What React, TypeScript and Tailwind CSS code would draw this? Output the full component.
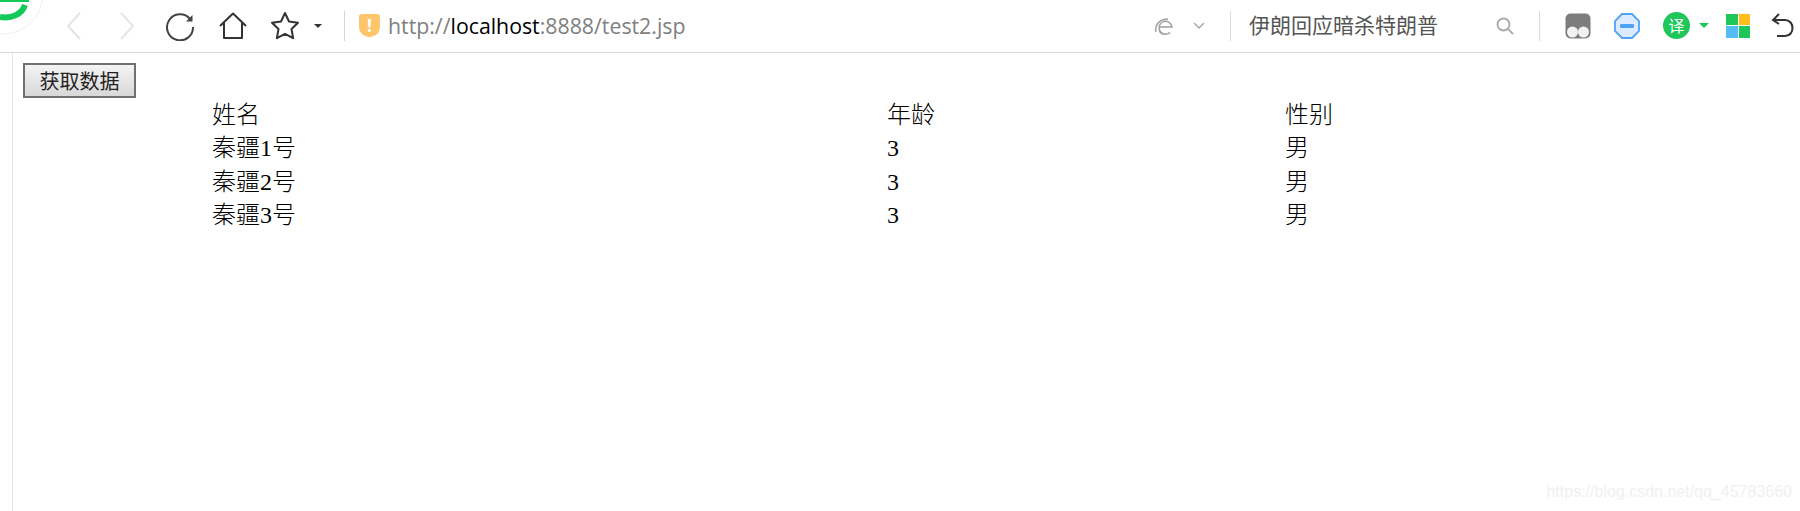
const rows = [
  { name: "秦疆1号", age: 3, sex: "男" },
  { name: "秦疆2号", age: 3, sex: "男" },
  { name: "秦疆3号", age: 3, sex: "男" },
];

const Toolbar = () => (
  <div className="flex h-[53px] items-center border-b border-[#d9d9d9] bg-white pb-[1px] font-['Open_Sans','Noto_Sans_CJK_SC',sans-serif]">
    <svg className="ml-[66px] h-[28px] w-[16px]" viewBox="0 0 16 28" fill="none" stroke="#e4e4e4" strokeWidth="2">
      <path d="M14 1 2 14l12 13" />
    </svg>
    <svg className="ml-[37px] h-[28px] w-[16px]" viewBox="0 0 16 28" fill="none" stroke="#e4e4e4" strokeWidth="2">
      <path d="M2 1l12 13L2 27" />
    </svg>
    <svg className="ml-[30px] h-[30px] w-[30px]" viewBox="0 0 30 30" fill="none" stroke="#444" strokeWidth="2">
      <path d="M25 8A13 13 0 1 0 28 16" />
      <path d="M21 10.500h6.500V4z" fill="#444" stroke="none" />
    </svg>
    <svg className="ml-[24px] h-[28px] w-[28px]" viewBox="0 0 28 28" fill="none" stroke="#333" strokeWidth="2" strokeLinejoin="round">
      <path d="M1 14 14 1.500 27 14" />
      <path d="M5 11v15h18V11" />
    </svg>
    <svg className="ml-[23px] h-[30px] w-[30px]" viewBox="0 0 30 30" fill="none" stroke="#333" strokeWidth="2" strokeLinejoin="round">
      <path d="m15 2 4 8.500 9 1.200-6.500 6.300 1.600 9.200L15 22.800l-8.100 4.400 1.600-9.200L2 11.700l9-1.200z" />
    </svg>
    <div className="ml-[14px] h-0 w-0 border-x-[4px] border-t-[4px] border-x-transparent border-t-[#333]" />
    <div className="ml-[22px] h-[30px] w-[1px] bg-[#d5d5d5]" />
    <div className="ml-[14px] flex h-[23px] w-[21px] items-center justify-center rounded-b-[10px] rounded-t-[3px] bg-[#ffc56b] text-[17px] font-bold leading-none text-white">
      !
    </div>
    <div className="ml-[8px] w-[640px] text-[21.300px] leading-none text-[#808080]">
      http://<span className="text-black">localhost</span>:8888/test2.jsp
    </div>
    <svg className="ml-[126px] h-[20px] w-[20px]" viewBox="0 0 20 20" fill="none" stroke="#a0a0a0" strokeWidth="1.500">
      <path d="M6 11h12a6.500 6.500 0 1 0-2 5.500c-3 2.500-8 2.500-10-.5-1-1.500-1-3-.5-4.500" />
      <path d="M2 16C0 9 6 3 14 3" />
    </svg>
    <svg className="ml-[19px] h-[8px] w-[12px]" viewBox="0 0 12 8" fill="none" stroke="#aaa" strokeWidth="1.500">
      <path d="m1 1 5 5 5-5" />
    </svg>
    <div className="ml-[25px] h-[30px] w-[1px] bg-[#dcdcdc]" />
    <div className="ml-[18px] w-[190px] text-[21px] leading-none text-[#555]">伊朗回应暗杀特朗普</div>
    <svg className="ml-[57px] h-[18px] w-[18px]" viewBox="0 0 18 18" fill="none" stroke="#aaa" strokeWidth="1.800">
      <circle cx="7.500" cy="7.500" r="6" />
      <path d="m12 12 5 5" />
    </svg>
    <div className="ml-[25px] h-[30px] w-[1px] bg-[#d9d9d9]" />
    <svg className="ml-[25px] h-[26px] w-[26px]" viewBox="0 0 26 26">
      <rect x="0.500" y="0.500" width="25" height="25" rx="5" fill="#7d7d7d" />
      <circle cx="7.500" cy="19" r="5.500" fill="#f2f2f2" />
      <circle cx="18.500" cy="19" r="5.500" fill="#f2f2f2" />
    </svg>
    <svg className="ml-[23px] h-[26px] w-[26px]" viewBox="0 0 26 26">
      <path d="M8 1h10l7 7v10l-7 7H8l-7-7V8z" fill="#dcebff" stroke="#4ea3f5" strokeWidth="1.800" />
      <rect x="6" y="11" width="14" height="4" rx="1" fill="#4ea3f5" />
    </svg>
    <div className="ml-[23px] flex h-[27px] w-[27px] items-center justify-center rounded-full bg-[#1fc75a] text-[16px] leading-none text-white">
      译
    </div>
    <div className="ml-[9px] h-0 w-0 border-x-[5px] border-t-[5px] border-x-transparent border-t-[#1fc75a]" />
    <div className="ml-[17px] grid h-[24px] w-[24px] grid-cols-2 gap-[1px]">
      <div className="bg-[#1fc75a]" />
      <div className="bg-[#ffbe1a]" />
      <div className="bg-[#55bdf5]" />
      <div className="bg-[#1fc75a]" />
    </div>
    <svg className="ml-[21px] h-[26px] w-[24px]" viewBox="0 0 24 26" fill="none" stroke="#333" strokeWidth="2">
      <path d="M3 7h11c10 0 10 16 0 16H6" />
      <path d="M8 1 2 7l6 4" />
    </svg>
  </div>
);

const App = () => {
  return (
    <div className="relative h-[511px] w-[1800px] overflow-hidden bg-white">
      <svg className="absolute left-0 top-0 z-10 h-[40px] w-[50px]" viewBox="0 0 50 40" fill="none">
        <circle cx="3" cy="-6" r="40" fill="white" stroke="#eeeeee" />
        <rect x="0" y="0" width="29" height="2" fill="#14c85a" />
        <path d="M0 17C12 19 22 14 25 5" stroke="#14c85a" strokeWidth="6" />
      </svg>
      <Toolbar />
      <div className="ml-[12px] h-[458px] border-l border-[#e4e4e4] pl-[10px] pt-[10px] font-['Liberation_Serif','Noto_Sans_CJK_SC',serif] text-[24px] leading-[33px] text-black">
        <button className="block h-[35px] w-[113px] border-2 border-[#707070] bg-gradient-to-b from-[#f4f4f4] to-[#d8d8d8] text-center font-['Noto_Sans_CJK_SC',sans-serif] text-[20px] leading-none text-[#222]">
          获取数据
        </button>
        <table className="ml-[189px] border-collapse font-light">
          <tbody>
            <tr>
              <td className="h-[34px] w-[675px] p-0">姓名</td>
              <td className="h-[34px] w-[398px] p-0">年龄</td>
              <td className="h-[34px] p-0">性别</td>
            </tr>
            {rows.map((row, i) => (
              <tr key={row.name}>
                <td className={i === 1 ? "h-[34px] p-0" : "h-[33px] p-0"}>{row.name}</td>
                <td className="p-0">{row.age}</td>
                <td className="p-0">{row.sex}</td>
              </tr>
            ))}
          </tbody>
        </table>
      </div>
      <div className="absolute bottom-[11px] right-[8px] font-['Liberation_Sans',sans-serif] text-[16px] leading-none text-[#f0f0f0]">
        https://blog.csdn.net/qq_45783660
      </div>
    </div>
  );
};

export default App;
